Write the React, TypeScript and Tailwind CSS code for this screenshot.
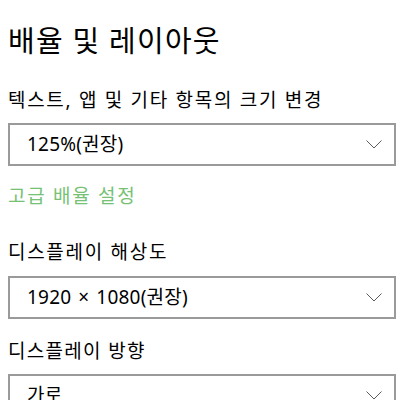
import React from "react";

const font = { fontFamily: '"Noto Sans", "Noto Sans CJK KR", sans-serif' };

function Chevron() {
  return (
    <svg width="16" height="9" viewBox="0 0 16 9" fill="none" className="shrink-0">
      <path d="M0.5 0.5 L8 8 L15.5 0.5" stroke="#5a5a5a" strokeWidth="1" />
    </svg>
  );
}

function Dropdown({ children }: { children: React.ReactNode }) {
  return (
    <div className="h-[43px] w-[388px] border-2 border-[#9a9a9a] bg-white flex items-center justify-between pl-[17px] pr-[12px]">
      <span className="text-[19px] text-black leading-none tracking-[0.2px] whitespace-pre">{children}</span>
      <Chevron />
    </div>
  );
}

export default function App() {
  return (
    <div
      className="w-[400px] h-[400px] overflow-hidden bg-white pl-2 pt-[20px] text-black"
      style={font}
    >
      <div className="h-[41px] flex items-center">
        <h1 className="text-[29px] leading-none font-normal tracking-[1.2px]">배율 및 레이아웃</h1>
      </div>

      <div className="mt-[19px] h-[40px] flex items-center">
        <span className="text-[19px] leading-none tracking-[1.7px]">텍스트, 앱 및 기타 항목의 크기 변경</span>
      </div>
      <div className="mt-[3px]">
        <Dropdown>125%(권장)</Dropdown>
      </div>

      <div className="mt-[11px] h-[39px] flex items-center">
        <span className="text-[19px] leading-none text-[#76c176] tracking-[1.7px]">고급 배율 설정</span>
      </div>

      <div className="mt-[16px] h-[40px] flex items-center">
        <span className="text-[19px] leading-none tracking-[1.7px]">디스플레이 해상도</span>
      </div>
      <div className="mt-[4px]">
        <Dropdown>
          1920<span className="mx-[7px]">×</span>1080(권장)
        </Dropdown>
      </div>

      <div className="mt-[12px] h-[40px] flex items-center">
        <span className="text-[19px] leading-none tracking-[1.3px]">디스플레이 방향</span>
      </div>
      <div className="mt-[3px]">
        <Dropdown>가로</Dropdown>
      </div>
    </div>
  );
}
